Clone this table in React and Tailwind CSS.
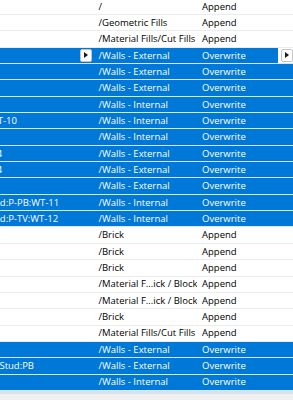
import React from "react";

const rows = [
  { name: "", path: "/", mode: "Append" },
  { name: "", path: "/Geometric Fills", mode: "Append" },
  { name: "", path: "/Material Fills/Cut Fills", mode: "Append" },
  { name: "", path: "/Walls - External", mode: "Overwrite", selected: true, editing: true },
  { name: "", path: "/Walls - External", mode: "Overwrite", selected: true },
  { name: "", path: "/Walls - External", mode: "Overwrite", selected: true },
  { name: "", path: "/Walls - Internal", mode: "Overwrite", selected: true },
  { name: "Cavity:WT-10", path: "/Walls - Internal", mode: "Overwrite", selected: true },
  { name: "", path: "/Walls - Internal", mode: "Overwrite", selected: true },
  { name: "Int:WT-04", path: "/Walls - External", mode: "Overwrite", selected: true },
  { name: "Int:WT-04", path: "/Walls - External", mode: "Overwrite", selected: true },
  { name: "", path: "/Walls - External", mode: "Overwrite", selected: true },
  { name: "Wall Lined:P-PB:WT-11", path: "/Walls - Internal", mode: "Overwrite", selected: true },
  { name: "Wall Lined:P-TV:WT-12", path: "/Walls - Internal", mode: "Overwrite", selected: true },
  { name: "", path: "/Brick", mode: "Append" },
  { name: "", path: "/Brick", mode: "Append" },
  { name: "", path: "/Brick", mode: "Append" },
  { name: "", path: "/Material F...ick / Block", mode: "Append" },
  { name: "", path: "/Material F...ick / Block", mode: "Append" },
  { name: "", path: "/Brick", mode: "Append" },
  { name: "", path: "/Material Fills/Cut Fills", mode: "Append" },
  { name: "", path: "/Walls - External", mode: "Overwrite", selected: true },
  { name: "Acoustic Stud:PB", path: "/Walls - External", mode: "Overwrite", selected: true },
  { name: "", path: "/Walls - Internal", mode: "Overwrite", selected: true },
];

function DropButton() {
  return (
    <div className="w-[12px] h-[13px] bg-white border border-[#c4c4c4] rounded-[2px] flex items-center justify-center">
      <svg width="4" height="6" viewBox="0 0 4 6">
        <path d="M0 0 L4 3 L0 6 Z" fill="#1a1a1a" />
      </svg>
    </div>
  );
}

function Row({ row }) {
  const sel = row.selected;
  return (
    <div
      className={`flex h-[16.35px] shrink-0 border-b ${
        sel ? "bg-[#0078d7] text-white border-[#d5e8f8]" : "bg-white text-black border-[#ececec]"
      }`}
    >
      <div className="w-[93px] shrink-0 flex items-center overflow-hidden">
        <div className="-ml-[40px] whitespace-nowrap flex-1">{row.name}</div>
        {row.editing && (
          <div className="mr-[1px]">
            <DropButton />
          </div>
        )}
      </div>
      <div className="w-[104px] shrink-0 pl-[5.5px] flex items-center whitespace-nowrap overflow-hidden">
        {row.path}
      </div>
      <div className="flex-1 flex items-stretch">
        <div className="flex-1 pl-[5px] flex items-center whitespace-nowrap">{row.mode}</div>
        {row.editing && (
          <div className="w-[15px] bg-white flex items-center justify-end">
            <DropButton />
          </div>
        )}
      </div>
    </div>
  );
}

export default function App() {
  return (
    <div className="w-[293px] h-[400px] overflow-hidden bg-[#f0f0f0] flex flex-col font-['Open_Sans',sans-serif] text-[9.5px] leading-none">
      <div className="-mt-[1.35px] flex flex-col bg-white">
        {rows.map((row, i) => (
          <Row key={i} row={row} />
        ))}
      </div>
      <div className="h-[2px] bg-[#cfe3f5]" />
      <div className="flex-1 border-t border-[#e2e2e2] bg-[#f0f0f0]" />
    </div>
  );
}
